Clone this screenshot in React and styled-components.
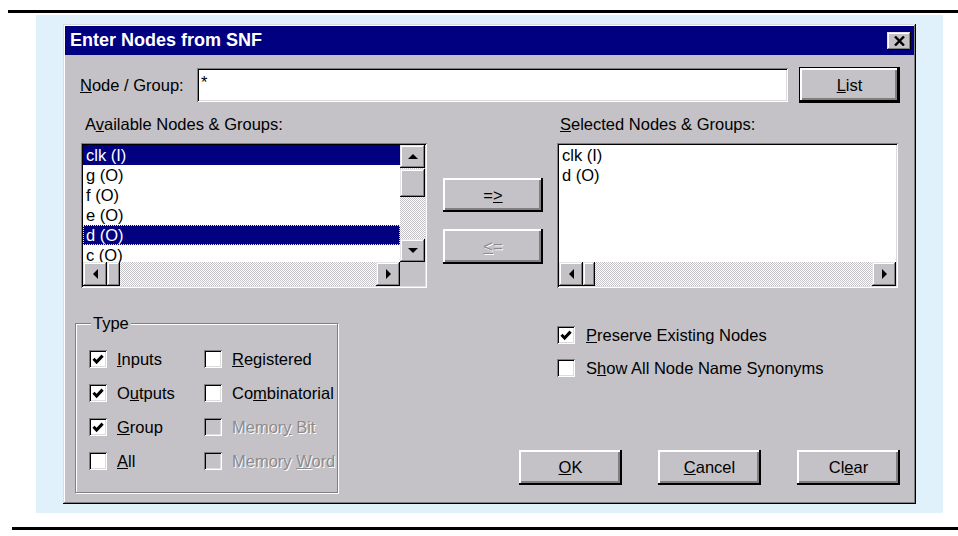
import React from "react";
import styled, { createGlobalStyle, css } from "styled-components";

const FACE = "#c4c2c6";
const NAVY = "#000080";
const FONT = `"Liberation Sans", Arial, sans-serif`;

const GlobalStyle = createGlobalStyle`
  html, body { margin: 0; padding: 0; background: #fff; }
  body { font-family: ${FONT}; font-size: 16.5px; color: #000; }
  * { box-sizing: border-box; }
`;

/* classic 3D bevels */
const raised = css`
  box-shadow: inset -2px -2px #000, inset 2px 2px #fff, inset -4px -4px #808080;
`;
const raisedThin = css`
  box-shadow: inset -1px -1px #000, inset 1px 1px #e4e4e4, inset -2px -2px #808080, inset 2px 2px #fff;
`;
const sunken = css`
  box-shadow: inset 1px 1px #808080, inset -1px -1px #fff, inset 2px 2px #000, inset -2px -2px #dcdcdc;
`;
const dither = css`
  background: repeating-conic-gradient(${FACE} 0 25%, #fff 0 50%) 0 0 / 2px 2px;
`;

const Page = styled.div`
  padding-top: 10px;
`;

const Rule = styled.div`
  height: 3px;
  background: #000;
  margin-left: ${p => p.$inset}px;
  margin-top: ${p => p.$top || 0}px;
`;

const Backdrop = styled.div`
  margin: 2px 0 0 36px;
  width: 907px;
  height: 498px;
  padding: 9px 0 0 27px;
  background: #e0f1fb;
`;

const Dialog = styled.div`
  width: 853px;
  height: 480px;
  padding: 2px;
  background: ${FACE};
  box-shadow: inset -1px -1px #000, inset 1px 1px #dcdcdc, inset -2px -2px #808080, inset 2px 2px #fff;
`;

const TitleBar = styled.div`
  height: 29px;
  background: ${NAVY};
  display: flex;
  align-items: center;
  justify-content: space-between;
  padding: 0 3px 0 5px;
`;

const TitleText = styled.span`
  color: #fff;
  font-weight: bold;
  font-size: 18px;
`;

const CloseButton = styled.div`
  width: 24px;
  height: 18px;
  background: ${FACE};
  ${raisedThin}
  display: grid;
  place-items: center;
`;

const Content = styled.div`
  padding-left: 10px;
`;

const FieldRow = styled.div`
  display: flex;
  align-items: center;
  height: 36px;
  margin-top: 12px;
  padding-left: 5px;
`;

const FieldLabel = styled.label`
  width: 117px;
  flex: none;
`;

const TextInput = styled.input`
  width: 591px;
  height: 34px;
  border: none;
  outline: none;
  background: #fff;
  ${sunken}
  font: 16.5px ${FONT};
  padding: 0 0 6px 4px;
`;

const PushButton = styled.button`
  width: ${p => p.$w}px;
  height: ${p => p.$h}px;
  margin-left: ${p => p.$ml || 0}px;
  flex: none;
  padding: 0;
  background: ${FACE};
  border: ${p => (p.$default ? "1px solid #000" : "none")};
  ${raised}
  font: 16.5px ${FONT};
  color: #000;
  &:disabled {
    color: #8c8a8e;
    text-shadow: 1px 1px #fff;
  }
`;

const ListGrid = styled.div`
  display: grid;
  grid-template-columns: 346px 130px 341px;
  margin-left: 6px;
  margin-top: ${p => p.$top}px;
`;

const CaptionText = styled.div`
  height: 20px;
  line-height: 20px;
  padding-left: ${p => p.$pl}px;
`;

const ListBox = styled.div`
  height: 145px;
  padding: 2px;
  background: #fff;
  ${sunken}
  display: grid;
  grid-template-columns: ${p => (p.$vscroll ? "1fr 25px" : "1fr")};
  grid-template-rows: 1fr 24px;
  overflow: hidden;
`;

const Items = styled.div`
  overflow: hidden;
  min-width: 0;
`;

const Item = styled.div`
  height: 20px;
  line-height: 20px;
  padding-left: 3px;
  white-space: nowrap;
  background: ${p => (p.$selected ? NAVY : "transparent")};
  color: ${p => (p.$selected ? "#fff" : "#000")};
  outline: ${p => (p.$focused ? "1px dotted #ffff00" : "none")};
  outline-offset: -1px;
`;

const VScroll = styled.div`
  display: flex;
  flex-direction: column;
  ${dither}
`;

const HScroll = styled.div`
  display: flex;
  grid-column: 1;
  ${dither}
`;

const ScrollButton = styled.div`
  flex: none;
  width: ${p => p.$w}px;
  height: ${p => p.$h}px;
  background: ${FACE};
  ${raisedThin}
  display: grid;
  place-items: center;
`;

const Thumb = styled.div`
  flex: none;
  width: ${p => p.$w}px;
  height: ${p => p.$h}px;
  margin: ${p => p.$m || 0};
  background: ${FACE};
  ${raisedThin}
`;

const Spacer = styled.div`
  flex: 1;
`;

const Corner = styled.div`
  background: ${FACE};
`;

const TransferColumn = styled.div`
  display: flex;
  flex-direction: column;
  gap: 17px;
  padding: 35px 0 0 16px;
`;

const Lower = styled.div`
  display: flex;
  margin-top: 35px;
`;

const GroupBox = styled.div`
  position: relative;
  width: 263px;
  height: 170px;
  border: 1px solid #808080;
  box-shadow: inset 1px 1px #fff, 1px 1px #fff;
  padding: 26px 0 0 13px;
  display: grid;
  grid-template-columns: 115px auto;
  grid-auto-rows: 18px;
  row-gap: 16px;
  align-content: start;
`;

const GroupTitle = styled.span`
  position: absolute;
  top: -11px;
  left: 15px;
  padding: 0 2px;
  line-height: 20px;
  background: ${FACE};
`;

const CheckRow = styled.label`
  display: flex;
  align-items: center;
  gap: ${p => p.$gap || 10}px;
  height: 18px;
  white-space: nowrap;
  color: ${p => (p.$disabled ? "#8c8a8e" : "#000")};
  text-shadow: ${p => (p.$disabled ? "1px 1px #fff" : "none")};
`;

const Box = styled.span`
  width: 18px;
  height: 18px;
  flex: none;
  background: ${p => (p.$disabled ? FACE : "#fff")};
  ${sunken}
  display: grid;
  place-items: center;
`;

const RightPane = styled.div`
  margin-left: 181px;
  width: 381px;
  display: flex;
  flex-direction: column;
`;

const Options = styled.div`
  display: flex;
  flex-direction: column;
  gap: 15px;
  padding: 3px 0 0 38px;
`;

const ButtonRow = styled.div`
  display: flex;
  margin-top: 73px;
`;

const Arrow = ({ dir }) => {
  const pts = {
    up: "0,5 5,0 10,5",
    down: "0,0 10,0 5,5",
    left: "5,0 5,10 0,5",
    right: "0,0 0,10 5,5",
  }[dir];
  const vertical = dir === "up" || dir === "down";
  return (
    <svg width={vertical ? 10 : 5} height={vertical ? 5 : 10} viewBox={vertical ? "0 0 10 5" : "0 0 5 10"}>
      <polygon points={pts} fill="#000" />
    </svg>
  );
};

const CheckMark = () => (
  <svg width="12" height="11" viewBox="0 0 12 11">
    <path d="M1.5 4.8 L4.6 8 L10.6 1.6" fill="none" stroke="#000" strokeWidth="3" />
  </svg>
);

const Check = ({ checked, disabled, gap, children }) => (
  <CheckRow $disabled={disabled} $gap={gap}>
    <Box $disabled={disabled}>{checked && <CheckMark />}</Box>
    <span>{children}</span>
  </CheckRow>
);

const HBar = ({ thumb }) => (
  <HScroll>
    <ScrollButton $w={24} $h={24}><Arrow dir="left" /></ScrollButton>
    <Thumb $w={thumb} $h={24} />
    <Spacer />
    <ScrollButton $w={24} $h={24}><Arrow dir="right" /></ScrollButton>
  </HScroll>
);

const available = [
  { label: "clk (I)", selected: true },
  { label: "g (O)" },
  { label: "f (O)" },
  { label: "e (O)" },
  { label: "d (O)", selected: true, focused: true },
  { label: "c (O)" },
];

const chosen = ["clk (I)", "d (O)"];

export default function App() {
  return (
    <>
      <GlobalStyle />
      <Page>
        <Rule $inset={8} />
        <Backdrop>
          <Dialog>
            <TitleBar>
              <TitleText>Enter Nodes from SNF</TitleText>
              <CloseButton>
                <svg width="11" height="10" viewBox="0 0 11 10">
                  <path d="M1 0.5 L10 9.5 M10 0.5 L1 9.5" stroke="#000" strokeWidth="2.4" />
                </svg>
              </CloseButton>
            </TitleBar>
            <Content>
              <FieldRow>
                <FieldLabel><u>N</u>ode / Group:</FieldLabel>
                <TextInput readOnly value="*" />
                <PushButton $w={101} $h={36} $ml={11} $default><u>L</u>ist</PushButton>
              </FieldRow>

              <ListGrid $top={11}>
                <CaptionText $pl={4}>A<u>v</u>ailable Nodes &amp; Groups:</CaptionText>
                <span />
                <CaptionText $pl={3}><u>S</u>elected Nodes &amp; Groups:</CaptionText>
              </ListGrid>

              <ListGrid $top={9}>
                <ListBox $vscroll>
                  <Items>
                    {available.map(it => (
                      <Item key={it.label} $selected={it.selected} $focused={it.focused}>{it.label}</Item>
                    ))}
                  </Items>
                  <VScroll>
                    <ScrollButton $w={25} $h={23}><Arrow dir="up" /></ScrollButton>
                    <Thumb $w={25} $h={28} $m="1px 0 0" />
                    <Spacer />
                    <ScrollButton $w={25} $h={23}><Arrow dir="down" /></ScrollButton>
                  </VScroll>
                  <HBar thumb={13} />
                  <Corner />
                </ListBox>

                <TransferColumn>
                  <PushButton $w={100} $h={34}>=<u>&gt;</u></PushButton>
                  <PushButton $w={100} $h={35} disabled><u>&lt;</u>=</PushButton>
                </TransferColumn>

                <ListBox>
                  <Items>
                    {chosen.map(label => (
                      <Item key={label}>{label}</Item>
                    ))}
                  </Items>
                  <HBar thumb={12} />
                </ListBox>
              </ListGrid>

              <Lower>
                <GroupBox>
                  <GroupTitle>Type</GroupTitle>
                  <Check checked><u>I</u>nputs</Check>
                  <Check><u>R</u>egistered</Check>
                  <Check checked>O<u>u</u>tputs</Check>
                  <Check>Co<u>m</u>binatorial</Check>
                  <Check checked><u>G</u>roup</Check>
                  <Check disabled>Memor<u>y</u> Bit</Check>
                  <Check><u>A</u>ll</Check>
                  <Check disabled>Memory <u>W</u>ord</Check>
                </GroupBox>

                <RightPane>
                  <Options>
                    <Check checked gap={11}><u>P</u>reserve Existing Nodes</Check>
                    <Check gap={11}>S<u>h</u>ow All Node Name Synonyms</Check>
                  </Options>
                  <ButtonRow>
                    <PushButton $w={103} $h={35}><u>O</u>K</PushButton>
                    <PushButton $w={103} $h={35} $ml={36}><u>C</u>ancel</PushButton>
                    <PushButton $w={103} $h={35} $ml={36}>Cl<u>e</u>ar</PushButton>
                  </ButtonRow>
                </RightPane>
              </Lower>
            </Content>
          </Dialog>
        </Backdrop>
        <Rule $inset={12} $top={14} />
      </Page>
    </>
  );
}
